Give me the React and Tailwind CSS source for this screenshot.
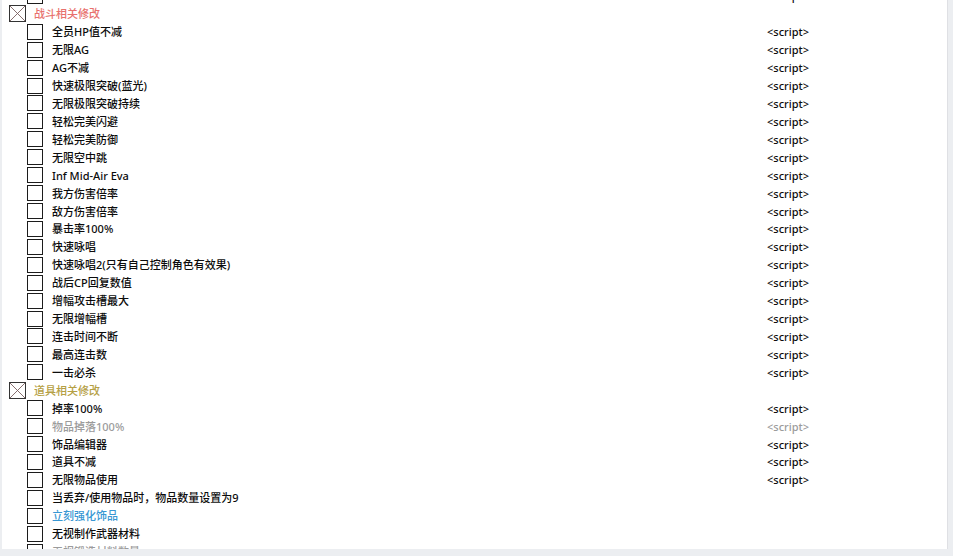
const groups = [
  {
    title: "战斗相关修改",
    color: "text-[#e8716d]",
    items: [
      { label: "全员HP值不减", script: true },
      { label: "无限AG", script: true },
      { label: "AG不减", script: true },
      { label: "快速极限突破(蓝光)", script: true },
      { label: "无限极限突破持续", script: true },
      { label: "轻松完美闪避", script: true },
      { label: "轻松完美防御", script: true },
      { label: "无限空中跳", script: true },
      { label: "Inf Mid-Air Eva", script: true },
      { label: "我方伤害倍率", script: true },
      { label: "敌方伤害倍率", script: true },
      { label: "暴击率100%", script: true },
      { label: "快速咏唱", script: true },
      { label: "快速咏唱2(只有自己控制角色有效果)", script: true },
      { label: "战后CP回复数值", script: true },
      { label: "增幅攻击槽最大", script: true },
      { label: "无限增幅槽", script: true },
      { label: "连击时间不断", script: true },
      { label: "最高连击数", script: true },
      { label: "一击必杀", script: true },
    ],
  },
  {
    title: "道具相关修改",
    color: "text-[#b5a044]",
    items: [
      { label: "掉率100%", script: true },
      { label: "物品掉落100%", script: true, muted: true },
      { label: "饰品编辑器", script: true },
      { label: "道具不减", script: true },
      { label: "无限物品使用", script: true },
      { label: "当丢弃/使用物品时，物品数量设置为9" },
      { label: "立刻强化饰品", color: "text-[#3897d3]" },
      { label: "无视制作武器材料" },
      { label: "无视锻造材料数量", muted: true },
    ],
  },
];

const GroupBox = () => (
  <svg width="17" height="17" viewBox="0 0 17 17" className="shrink-0">
    <rect x="0.5" y="0.5" width="16" height="16" fill="white" stroke="#333" />
    <path d="M1 1 L16 16 M16 1 L1 16" stroke="#7a5f5f" strokeWidth="0.9" />
  </svg>
);

const ItemRow = ({ label, script, muted, color }) => (
  <div className="flex items-center h-[17.93px]">
    <div className="w-[765px] flex items-center pl-[25px]">
      <div className="w-4 h-4 border border-[#1c1c1c] bg-white shrink-0" />
      {label && (
        <span
          className={`ml-[9px] whitespace-nowrap ${
            color ? color : muted ? "text-[#9b9b9b]" : "text-[#0c0c0c]"
          }`}
        >
          {label}
        </span>
      )}
    </div>
    {script && (
      <span className={muted ? "text-[#9b9b9b]" : "text-[#0c0c0c]"}>
        {"<script>"}
      </span>
    )}
  </div>
);

const GroupRow = ({ title, color }) => (
  <div className="flex items-center h-[17.93px] pl-[7px]">
    <GroupBox />
    <span className={`ml-[8px] whitespace-nowrap ${color}`}>{title}</span>
  </div>
);

export default function App() {
  return (
    <div className="w-[953px] h-[556px] bg-[#eceef1] overflow-hidden">
      <div className="ml-[2px] w-[946px] h-[549px] bg-white border-r border-[#dfe0e4] overflow-hidden font-['Noto_Sans','Noto_Sans_CJK_SC',sans-serif] text-[11px] leading-none font-medium">
        {/* list is scrolled a little, so the first row is cut off */}
        <div className="-mt-[13px]">
          <ItemRow script />
          {groups.map((group) => (
            <div key={group.title}>
              <GroupRow title={group.title} color={group.color} />
              {group.items.map((item) => (
                <ItemRow key={item.label} {...item} />
              ))}
            </div>
          ))}
        </div>
      </div>
    </div>
  );
}
